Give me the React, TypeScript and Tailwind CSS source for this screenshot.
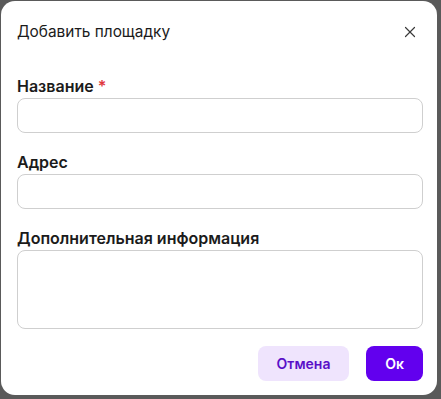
import { X } from 'lucide-react';

function Field({ label, required, tall }: { label: string; required?: boolean; tall?: boolean }) {
  return (
    <div className="flex flex-col">
      <label className="text-[16px] leading-5 font-semibold text-[#1b1b1b]">
        {label}
        {required && <span className="text-[#e0383e] ml-1">*</span>}
      </label>
      {tall ? (
        <textarea className="mt-[2px] h-[79px] w-full resize-none rounded-[8px] border border-[#cfcfcf] bg-white outline-none" />
      ) : (
        <input className="mt-[2px] h-[35px] w-full rounded-[8px] border border-[#cfcfcf] bg-white outline-none" />
      )}
    </div>
  );
}

export default function App() {
  return (
    <div
      className="w-[441px] h-[399px] bg-[#5a5a5a] pt-px pl-px"
      style={{ fontFamily: 'Inter, "Noto Sans", sans-serif' }}
    >
      <div className="w-[436px] h-[394px] rounded-[14px] bg-white pl-4 pr-[14px] pt-[21px] flex flex-col">
        <div className="flex items-center justify-between h-5">
          <h2 className="text-[15.4px] leading-5 text-[#1b1b1b]">Добавить площадку</h2>
          <button className="text-[#3a3a3a] mr-[4px]" title="Закрыть">
            <X size={18} strokeWidth={1.6} />
          </button>
        </div>

        <div className="mt-[34px] flex flex-col gap-[19px]">
          <Field label="Название" required />
          <Field label="Адрес" />
          <Field label="Дополнительная информация" tall />
        </div>

        <div className="mt-[17px] flex justify-end gap-[17px]">
          <button className="h-[35px] w-[91px] rounded-[8px] bg-[#efe4fd] text-[14px] font-semibold text-[#5a10c8]">
            Отмена
          </button>
          <button className="h-[35px] w-[57px] rounded-[8px] bg-[#6200ee] text-[14px] font-semibold text-white">
            Ок
          </button>
        </div>
      </div>
    </div>
  );
}
